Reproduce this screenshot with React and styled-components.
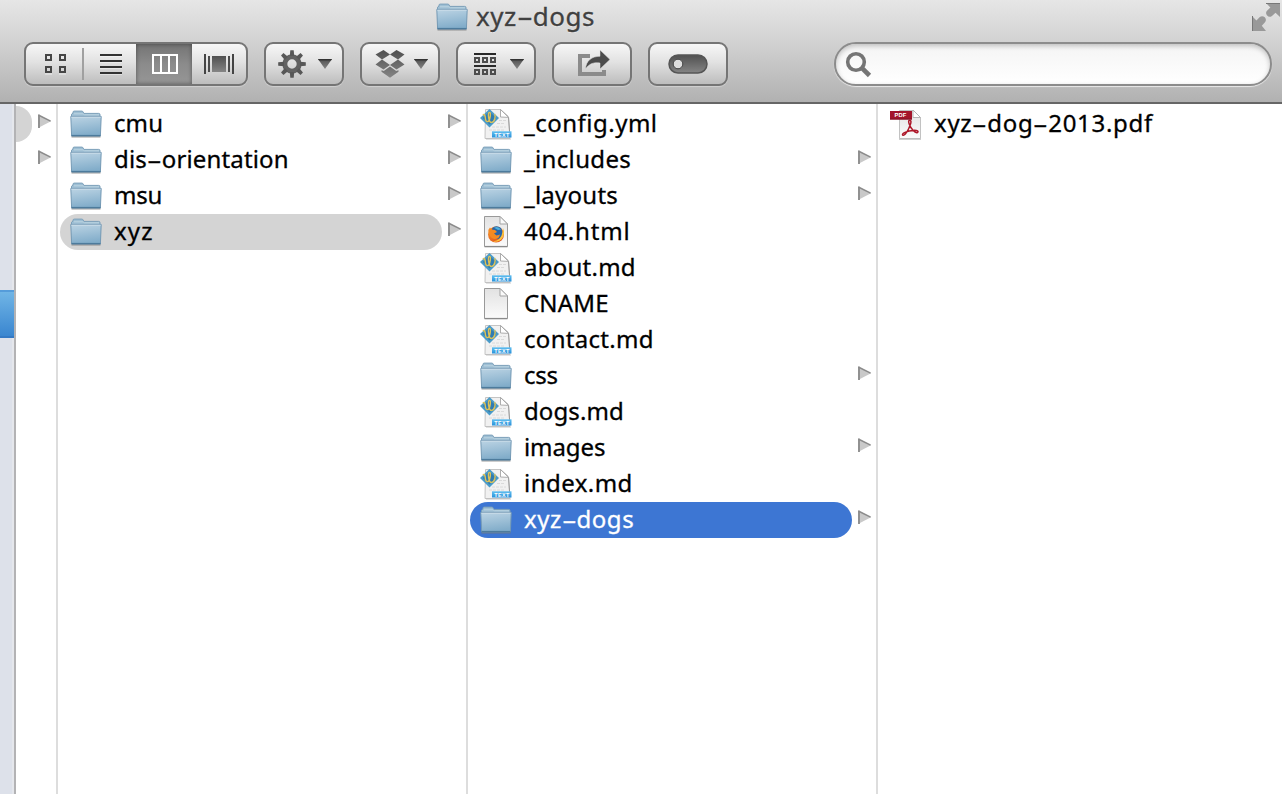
import React from "react";
import styled, { createGlobalStyle, css } from "styled-components";

const GlobalStyle = createGlobalStyle`
  html, body { margin: 0; padding: 0; background: #fff; overflow: hidden; }
  * { box-sizing: border-box; }
`;

const Window = styled.div`
  width: 1282px;
  height: 794px;
  display: flex;
  flex-direction: column;
  overflow: hidden;
  background: #fff;
  font-family: "Noto Sans", "Open Sans", sans-serif;
  font-size: 24px;
  color: #000;
`;

const Header = styled.header`
  position: relative;
  flex: 0 0 104px;
  display: flex;
  flex-direction: column;
  border-bottom: 2px solid #666;
  background: linear-gradient(#e6e6e6 0, #d2d2d2 42px, #b1b1b1 102px);
`;

const TitleBar = styled.div`
  height: 42px;
  padding-left: 436px;
  display: flex;
  align-items: flex-start;
`;

const TitleIcon = styled.div`
  height: 34px;
  margin-top: -2px;
`;

const Title = styled.h1`
  margin: 0 0 0 8px;
  font-size: 26px;
  font-weight: 400;
  line-height: 33px;
  color: #404040;
  -webkit-text-stroke: 0.3px #404040;
  letter-spacing: ${(p) => p.$tracking}px;
  text-shadow: 0 1px 0 rgba(255, 255, 255, 0.5);
  white-space: nowrap;
`;

const WideHyphen = styled.span`
  display: inline-block;
  width: 0.62em;
  text-align: center;
  letter-spacing: 0;
  transform: scaleX(1.9);
`;

const FullScreen = styled.div`
  position: absolute;
  top: 2px;
  right: 1px;
  width: 30px;
  height: 30px;
`;

const Toolbar = styled.div`
  display: flex;
  gap: 16px;
  padding: 0 10px 0 24px;
`;

const raised = css`
  height: 44px;
  border: 2px solid #757575;
  border-radius: 9px;
  background: linear-gradient(#f7f7f7, #e2e2e2 45%, #bdbdbd);
  box-shadow: 0 1px 1px rgba(255, 255, 255, 0.35);
`;

const Segmented = styled.div`
  ${raised}
  width: 224px;
  display: flex;
  overflow: hidden;
`;

const Segment = styled.div`
  width: ${(p) => p.$width}px;
  padding-left: ${(p) => p.$inset || 0}px;
  display: flex;
  align-items: center;
  justify-content: center;
  ${(p) =>
    p.$active &&
    css`
      background: linear-gradient(#747474, #8b8b8b 50%, #969696);
      box-shadow: inset 0 0 4px rgba(0, 0, 0, 0.4);
    `}
`;

const SegmentDivider = styled.div`
  width: 2px;
  height: 32px;
  margin-top: 4px;
  background: #a0a0a0;
`;

const Button = styled.div`
  ${raised}
  width: 80px;
  padding-left: ${(p) => p.$inset || 0}px;
  display: flex;
  align-items: center;
  justify-content: center;
`;

const Search = styled.div`
  width: 438px;
  height: 44px;
  margin-left: auto;
  border: 2px solid #8c8c8c;
  border-radius: 22px;
  background: linear-gradient(#f4f4f4, #fff);
  box-shadow: inset 0 2px 5px rgba(0, 0, 0, 0.22), 0 1px 1px rgba(255, 255, 255, 0.7);
  padding: 7px 9px;
`;

const Browser = styled.main`
  flex: 1;
  display: flex;
`;

const Sidebar = styled.aside`
  width: 16px;
  padding-top: 186px;
  background: linear-gradient(90deg, #dde1ea 12px, #e5e7ec 12px);
  border-right: 2px solid #b3b3b5;
`;

const SidebarSelection = styled.div`
  height: 48px;
  border-top: 2px solid #559cda;
  border-bottom: 2px solid #3479c4;
  background: linear-gradient(#70b5e6, #3a86d0);
`;

const Column = styled.section`
  ${(p) => (p.$width ? `width: ${p.$width}px; border-right: 2px solid #ddd;` : "flex: 1;")}
  padding: 2px 0 0 ${(p) => (p.$flush ? 0 : 2)}px;
`;

const Row = styled.div`
  display: flex;
  height: 36px;
`;

const Pill = styled.div`
  width: ${(p) => p.$width}px;
  height: 36px;
  margin-right: 6px;
  padding-left: 10px;
  display: flex;
  align-items: flex-start;
  border-radius: ${(p) => (p.$clipped ? "0 18px 18px 0" : "18px")};
  background: ${(p) => ({ active: "#3d76d3", trail: "#d4d4d4" })[p.$state] || "transparent"};
  color: ${(p) => (p.$state === "active" ? "#fff" : "#000")};
`;

const IconSlot = styled.div`
  width: 32px;
  height: 36px;
  margin-top: -1px;
  flex: none;
  svg { display: block; }
`;

const Label = styled.span`
  margin-left: 12px;
  line-height: 34px;
  white-space: nowrap;
  letter-spacing: ${(p) => p.$tracking}px;
  -webkit-text-stroke: 0.3px currentColor;
`;

const Arrow = styled.svg`
  width: 14px;
  height: 15px;
  margin-top: 8px;
  display: block;
`;

const Glyph = styled.svg`
  display: block;
  overflow: visible;
  margin-right: ${(p) => p.$gap || 0}px;
`;

const HiddenDefs = styled.svg`
  position: absolute;
`;

function Name({ text }) {
  return text.split("-").map((part, i) => (
    <React.Fragment key={i}>
      {i > 0 && <WideHyphen>-</WideHyphen>}
      {part}
    </React.Fragment>
  ));
}

function Disclosure() {
  return (
    <Arrow viewBox="0 0 14 15">
      <path d="M0 0.5V14L13 7.3Z" fill="#c9c9c9" />
      <path d="M1 0.8V14" stroke="#8b8b8b" strokeWidth="1.8" />
      <path d="M0.3 1L12.6 7.2" stroke="#8b8b8b" strokeWidth="1.4" />
    </Arrow>
  );
}

function Defs() {
  return (
    <HiddenDefs width="0" height="0">
      <defs>
        <linearGradient id="folder" x1="0" y1="0" x2="0.2" y2="1">
          <stop offset="0" stopColor="#bcd4e4" />
          <stop offset="1" stopColor="#82adca" />
        </linearGradient>
        <linearGradient id="page" x1="0" y1="0" x2="0" y2="1">
          <stop offset="0" stopColor="#e2e2e2" />
          <stop offset="1" stopColor="#fbfbfb" />
        </linearGradient>
        <linearGradient id="glyph" x1="0" y1="0" x2="0" y2="1">
          <stop offset="0" stopColor="#505050" />
          <stop offset="1" stopColor="#858585" />
        </linearGradient>
        <linearGradient id="band" x1="0" y1="0" x2="0" y2="1">
          <stop offset="0" stopColor="#62bff0" />
          <stop offset="1" stopColor="#2a91da" />
        </linearGradient>
        <linearGradient id="flame" x1="0" y1="0" x2="1" y2="1">
          <stop offset="0" stopColor="#f3902a" />
          <stop offset="1" stopColor="#df4b1c" />
        </linearGradient>
      </defs>
    </HiddenDefs>
  );
}

function Folder() {
  return (
    <svg width="32" height="36" viewBox="0 0 32 36">
      <path d="M1.5 31.8H30.5" stroke="#777" strokeOpacity=".6" strokeWidth="1.6" />
      <path d="M1.5 12V9.2L3 8V7.2Q3 6.1 4.2 6.1H11.8Q12.8 6.1 13.2 7L13.7 8.4H28.7Q30 8.4 30 9.6V13Z" fill="#9ebfd4" stroke="#7b9fb9" />
      <path d="M4 8.8H13L14.5 9.8H29" stroke="#bdd4e2" fill="none" />
      <path d="M.8 11.4H31.2L30.4 30.9H1.6Z" fill="url(#folder)" stroke="#7499b4" strokeWidth="1" />
      <path d="M1.3 12.2H30.7" stroke="#cfe0eb" strokeWidth=".9" />
      <path d="M1.5 30.6H30.5" stroke="#4d7b9c" strokeWidth="1.4" />
    </svg>
  );
}

function Page({ children }) {
  return (
    <svg width="32" height="36" viewBox="0 0 32 36">
      <path d="M4.5 3.5H20L27.5 11V33.4H4.5Z" fill="url(#page)" stroke="#999" strokeWidth="1" />
      <path d="M4.5 33.8H27.5" stroke="#777" strokeWidth=".8" />
      <path d="M20 3.5V11H27.5Z" fill="#fafafa" stroke="#a3a3a3" strokeWidth="1" />
      {children}
    </svg>
  );
}

function HtmlFile() {
  return (
    <Page>
      <circle cx="16" cy="21.5" r="8" fill="url(#flame)" />
      <path d="M12 15.5Q16 11.5 21 15L22.6 19Q22.5 25 18 26Q14 26 12.5 23Z" fill="#2864a8" />
      <path d="M14 14.8Q18 12.5 21 16.5L18 17Z" fill="#4db2dd" />
      <path d="M8.3 17L10 14.5L11.5 16.5L15 17L17 19L14 20.6L16.5 22.6L20 21.5Q19 26.6 14 26Q9 25 8.3 17Z" fill="#f58a22" />
      <path d="M23 15Q25.3 20 22.5 25Q19 29.8 13 28.4Q21 27.5 22.3 20Z" fill="#fbc33c" />
    </Page>
  );
}

function TextFile() {
  return (
    <svg width="32" height="36" viewBox="0 0 32 36">
      <path d="M5.5 4.5H20.5L28.5 12L30 33.5H5Z" fill="#f1f1f1" stroke="#c4c4c4" strokeWidth="1" />
      <path d="M20.5 4.5L28.5 12L29.6 27" fill="none" stroke="#999" strokeWidth="1" />
      <path d="M20.5 4.5V12L28.5 12.4Z" fill="#fff" stroke="#a5a5a5" strokeWidth=".9" />
      <path d="M19 15.5H26M17 18.5H25M12 22H26M9 25H24" stroke="#dadada" strokeWidth="1" strokeDasharray="3 1" />
      <path d="M0 13L9.5 4L19 13L9.5 22.5Z" fill="#4a9bc9" />
      <path d="M2.8 13L9.5 6.6L16.2 13L9.5 19.6Z" fill="#2f7cb2" />
      <path d="M2.8 9.8C4.8 8.8 5.2 11 5.4 13.5C5.6 17 8.6 18.2 9.8 13.5C10.8 9.5 10.6 7 9.3 7.4C7.6 8.2 8.6 17.6 11.6 17.4C15 17 15.8 11 14.6 9" fill="none" stroke="#dcc25a" strokeWidth="1.4" />
      <rect x="12" y="26.3" width="19.5" height="6.2" fill="url(#band)" />
      <text x="21.9" y="31.6" textAnchor="middle" fontFamily="Liberation Sans, sans-serif" fontWeight="700" fontSize="5.4" letterSpacing=".4" fill="#fff">TEXT</text>
      <path d="M6 34.1H31" stroke="#bbb" strokeWidth=".7" />
    </svg>
  );
}

function PdfFile() {
  return (
    <svg width="32" height="36" viewBox="0 0 32 36">
      <path d="M9.5 5.5H23.5L30.5 12.5V33.5H9.5Z" fill="url(#page)" stroke="#c2c2c2" />
      <path d="M9 34.2H31" stroke="#aaa" strokeWidth=".8" />
      <path d="M23 5V12.5H30.5Z" fill="#fff" stroke="#b5b5b5" />
      <path d="M0 6H22V14.5H0Z" fill="#a3142b" />
      <path d="M0 14H22" stroke="#801226" />
      <text x="10.4" y="12.3" textAnchor="middle" fontFamily="Liberation Sans, sans-serif" fontWeight="700" fontSize="5.8" fill="#fff">PDF</text>
      <path d="M19.5 15.3C22.4 15.3 20.4 20 18.5 24C16.5 28.2 14 31.3 12.6 29.9C11.5 28.2 18 25.8 23.3 25.4C27.6 25.1 29 26.6 27.4 27.5C25 28.5 20.8 23.4 19.2 19C18.4 16.8 18.5 15.3 19.5 15.3Z" fill="none" stroke="#ad1628" strokeWidth="1.5" />
    </svg>
  );
}

const fileIcons = { folder: Folder, text: TextFile, html: HtmlFile, blank: Page, pdf: PdfFile };

function Entry({ item }) {
  const [name, kind, tracking, state] = item;
  const Icon = fileIcons[kind];
  return (
    <Row>
      <Pill $width={382} $state={state}>
        <IconSlot><Icon /></IconSlot>
        <Label $tracking={tracking}><Name text={name} /></Label>
      </Pill>
      {kind === "folder" && <Disclosure />}
    </Row>
  );
}

const places = [
  ["cmu", "folder", 0.1],
  ["dis-orientation", "folder", 0.15],
  ["msu", "folder", -0.2],
  ["xyz", "folder", 1.1, "trail"],
];

const files = [
  ["_config.yml", "text", 0.5],
  ["_includes", "folder", 0.35],
  ["_layouts", "folder", 0.25],
  ["404.html", "html", 0.85],
  ["about.md", "text", 0.25],
  ["CNAME", "blank", 0.2],
  ["contact.md", "text", 0.3],
  ["css", "folder", -0.2],
  ["dogs.md", "text", 0.1],
  ["images", "folder", -0.1],
  ["index.md", "text", 0.45],
  ["xyz-dogs", "folder", 0.5, "active"],
];

const documents = [["xyz-dog-2013.pdf", "pdf", 0.7]];

function GridIcon() {
  return (
    <svg width="24" height="22" viewBox="0 0 24 22" fill="none" stroke="#464646" strokeWidth="2">
      <path d="M2 2H7V7H2ZM16 2H21V7H16ZM2 14H7V19H2ZM16 14H21V19H16Z" />
      <path d="M1 21H8M15 21H22" stroke="#fff" strokeOpacity=".6" strokeWidth="1" />
    </svg>
  );
}

function ListIcon() {
  return (
    <svg width="22" height="22" viewBox="0 0 22 22">
      <path d="M0 3H22M0 9H22M0 15H22M0 21H22" stroke="#fff" strokeOpacity=".4" strokeWidth="2" />
      <path d="M0 2H22M0 8H22M0 14H22M0 20H22" stroke="#333" strokeWidth="2" />
    </svg>
  );
}

function ColumnsIcon() {
  return (
    <svg width="26" height="20" viewBox="0 0 26 20">
      <path d="M1 1H25V19H1ZM9 1V19M17 1V19" fill="none" stroke="#fff" strokeWidth="2" />
    </svg>
  );
}

function CoverFlowIcon() {
  return (
    <svg width="30" height="20" viewBox="0 0 30 20">
      <rect x="8" y="2" width="14" height="16" fill="url(#glyph)" />
      <path d="M1 0V20M29 0V20" stroke="#444" strokeWidth="2" />
      <path d="M5 2V18M25 2V18" stroke="#4b4b4b" strokeWidth="2" />
    </svg>
  );
}

function Caret() {
  return (
    <svg width="14" height="12" viewBox="0 0 14 12">
      <path d="M0 1H14L7 11Z" fill="url(#glyph)" />
      <path d="M0 1H14L13 2.5H1Z" fill="#333" />
    </svg>
  );
}

function GearIcon() {
  const teeth = [0, 45, 90, 135, 180, 225, 270, 315];
  return (
    <Glyph width="28" height="28" viewBox="-14 -14 28 28" $gap={12}>
      <circle r="7.2" fill="none" stroke="#626262" strokeWidth="5" />
      {teeth.map((angle) => (
        <path key={angle} d="M-2.2 -8L-1.7 -13.8H1.7L2.2 -8Z" fill="#575757" transform={`rotate(${angle})`} />
      ))}
    </Glyph>
  );
}

function DropboxIcon() {
  return (
    <Glyph width="30" height="30" viewBox="0 0 30 30" $gap={9} fill="url(#glyph)">
      <path d="M8.5 1L15 5.5L7 10.5L.5 5.5ZM21.5 1L29.5 5.5L23 10.5L15 5.5ZM7 10.5L15 16L8.5 20.5L.5 15.5ZM23 10.5L29.5 15.5L21.5 20.5L15 16ZM6.5 21.3L8.8 22L15 17.4L21.2 22L23.5 21.3V22.8L15 28.8L6.5 22.8Z" />
    </Glyph>
  );
}

function ArrangeIcon() {
  return (
    <Glyph width="22" height="24" viewBox="0 0 22 24" $gap={14}>
      <path d="M0 2H22M0 14H22" stroke="#292929" strokeWidth="2" />
      <path d="M1 6H5V10H1ZM9 6H13V10H9ZM17 6H21V10H17ZM1 18H5V22H1ZM9 18H13V22H9ZM17 18H21V22H17Z" fill="none" stroke="#4d4d4d" strokeWidth="2" />
    </Glyph>
  );
}

function ShareIcon() {
  return (
    <Glyph width="32" height="28" viewBox="0 0 32 28">
      <path d="M12 6H2V24H26V20" fill="none" stroke="#8b8b8b" strokeWidth="4" />
      <path d="M7.5 19C8 10.5 14 6.3 22 6.3V0L32 9.5L22 19V13C15.5 12 11 13.8 7.5 19Z" fill="#4c4c4c" stroke="#e0e0e0" strokeWidth=".5" />
    </Glyph>
  );
}

function ToggleIcon() {
  return (
    <Glyph width="40" height="20" viewBox="0 0 40 20">
      <rect x="1" y="1" width="38" height="18" rx="9" fill="url(#glyph)" stroke="#555" strokeWidth="1.5" />
      <circle cx="10" cy="10" r="4.8" fill="#dedede" stroke="#444" strokeWidth="1" />
    </Glyph>
  );
}

export default function App() {
  return (
    <Window>
      <GlobalStyle />
      <Defs />
      <Header>
        <TitleBar>
          <TitleIcon><Folder /></TitleIcon>
          <Title $tracking={0.5}><Name text="xyz-dogs" /></Title>
        </TitleBar>
        <FullScreen>
          <svg width="30" height="30" viewBox="0 0 30 30" fill="#999">
            <path d="M15 1H29V15L24.5 10.8L20.7 14.3Q18 15.7 15.9 13.3Q14.2 10.8 16 8.8L19.4 5.5Z" />
            <path d="M1 14L5.4 18.4L8.8 15.1Q11.2 13.2 13.8 15.3Q15.9 17.8 14 20.2L10.8 23.8L15 29H1Z" />
            <path d="M15 1.5H29M1.5 14V29" stroke="#777" fill="none" />
          </svg>
        </FullScreen>
        <Toolbar>
          <Segmented>
            <Segment $width={56} $inset={3}><GridIcon /></Segment>
            <SegmentDivider />
            <Segment $width={52} $inset={2}><ListIcon /></Segment>
            <Segment $width={56} $inset={2} $active><ColumnsIcon /></Segment>
            <Segment $width={54}><CoverFlowIcon /></Segment>
          </Segmented>
          <Button $inset={2}><GearIcon /><Caret /></Button>
          <Button $inset={2}><DropboxIcon /><Caret /></Button>
          <Button $inset={6}><ArrangeIcon /><Caret /></Button>
          <Button $inset={4}><ShareIcon /></Button>
          <Button><ToggleIcon /></Button>
          <Search>
            <svg width="28" height="28" viewBox="0 0 28 28" fill="none" stroke="#757575">
              <circle cx="11" cy="11" r="8.3" strokeWidth="3.6" />
              <path d="M16.8 16.8L24.5 24.5" strokeWidth="4.6" />
            </svg>
          </Search>
        </Toolbar>
      </Header>
      <Browser>
        <Sidebar><SidebarSelection /></Sidebar>
        <Column $width={42} $flush>
          <Row><Pill $width={16} $state="trail" $clipped /><Disclosure /></Row>
          <Row><Pill $width={16} /><Disclosure /></Row>
        </Column>
        <Column $width={410}>
          {places.map((item) => <Entry key={item[0]} item={item} />)}
        </Column>
        <Column $width={410}>
          {files.map((item) => <Entry key={item[0]} item={item} />)}
        </Column>
        <Column>
          {documents.map((item) => <Entry key={item[0]} item={item} />)}
        </Column>
      </Browser>
    </Window>
  );
}
